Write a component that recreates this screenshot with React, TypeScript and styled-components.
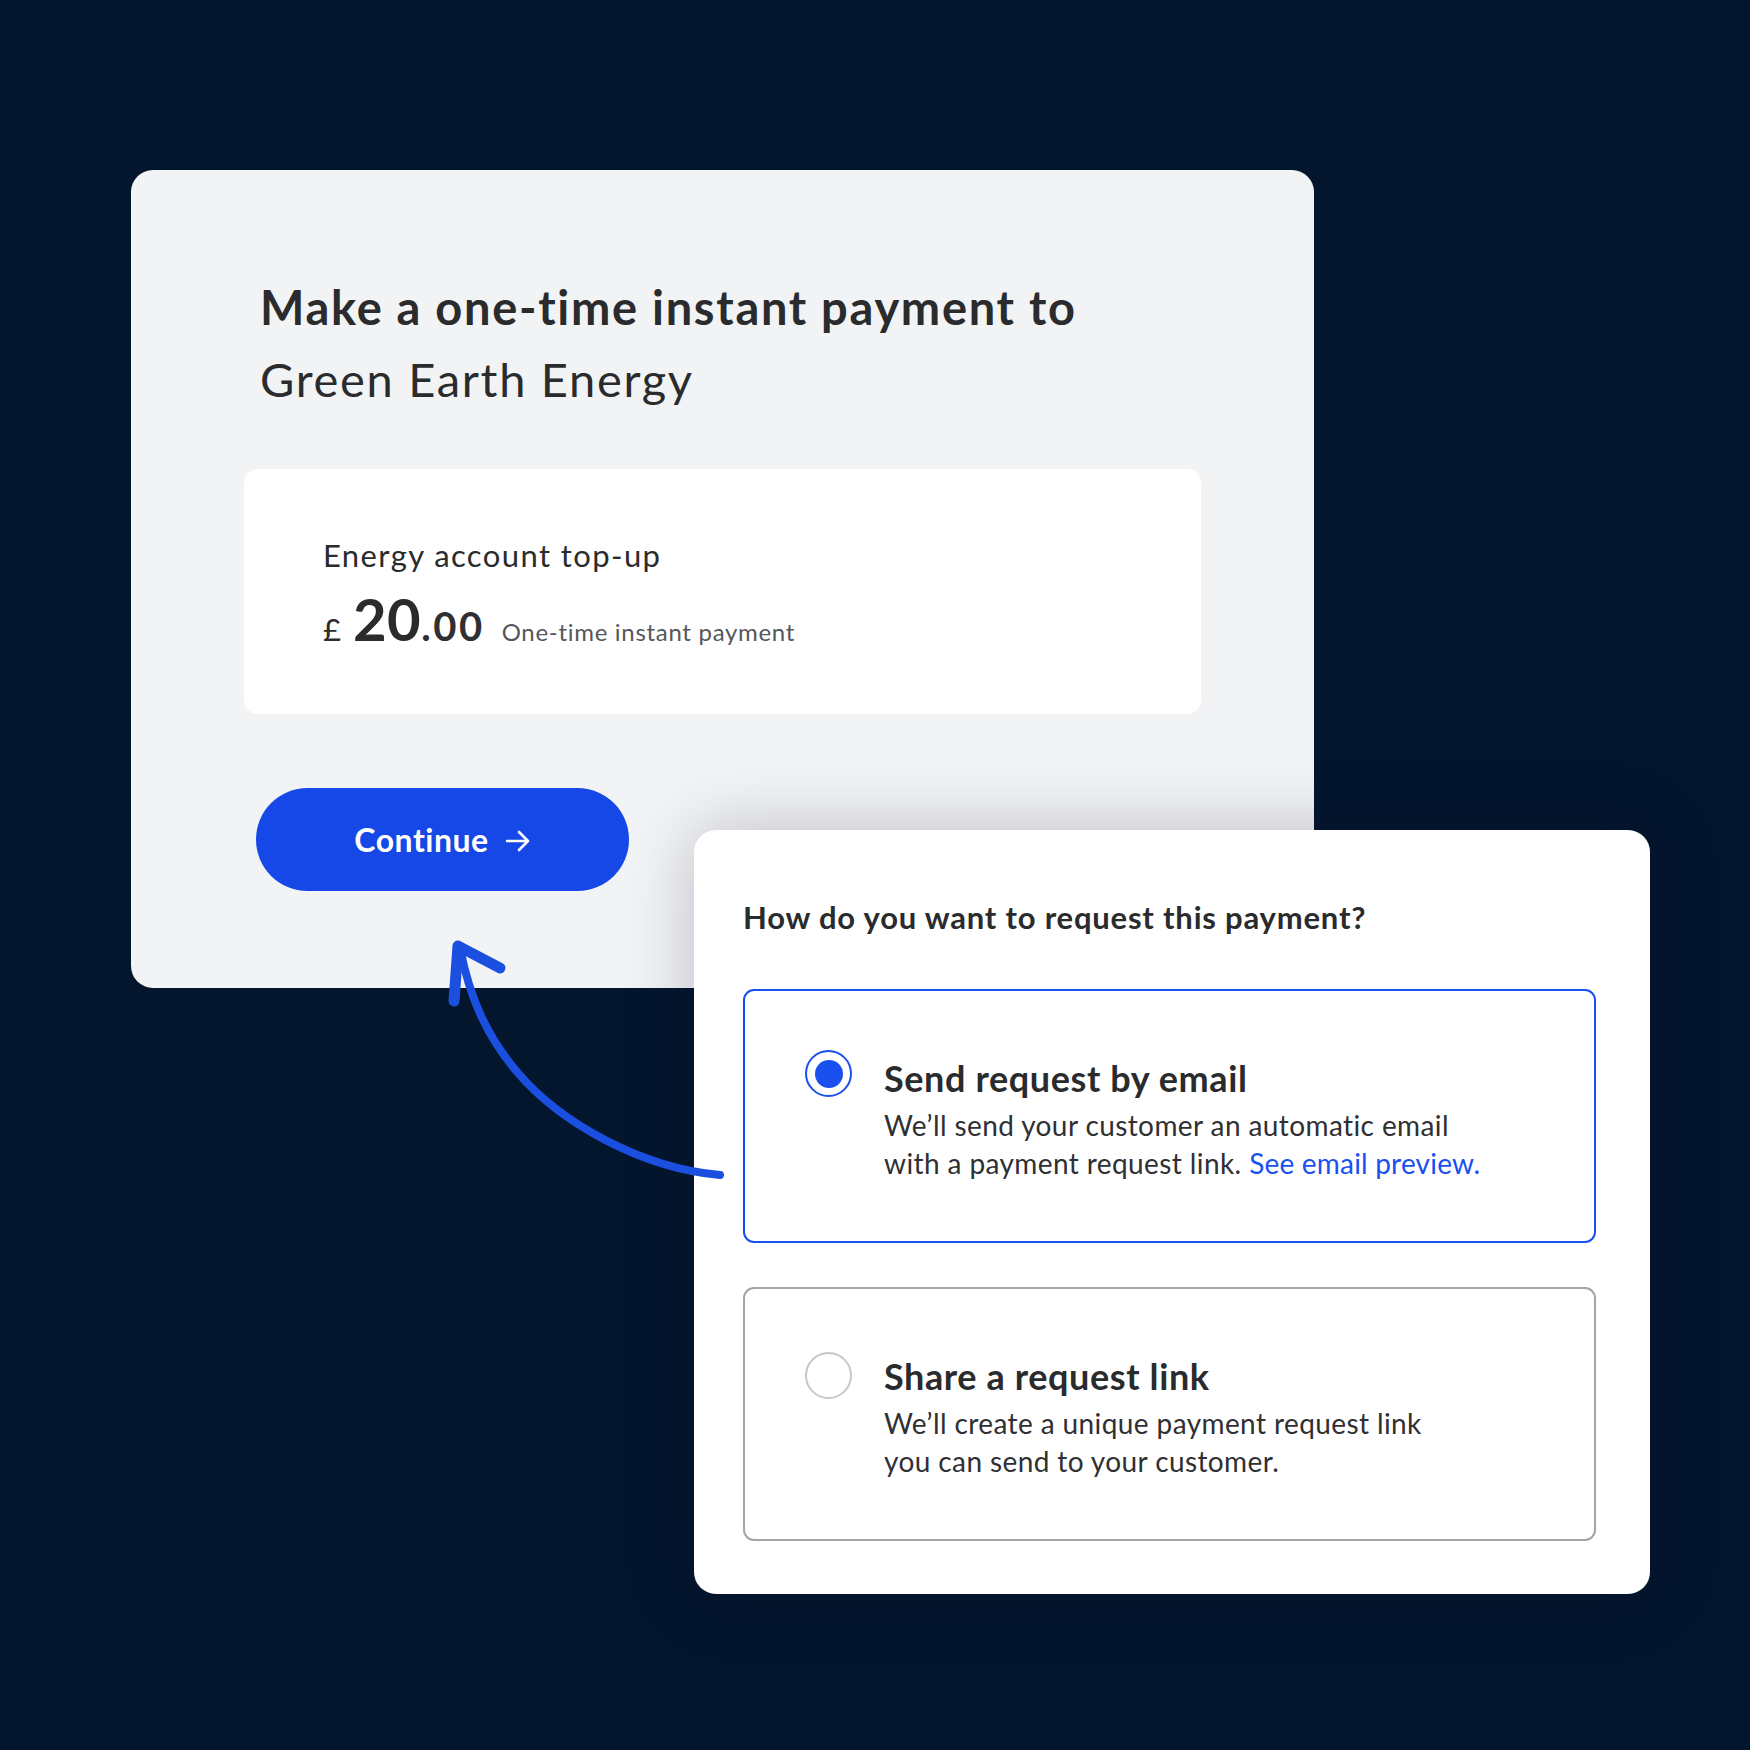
import React, { useState } from 'react'
import styled, { createGlobalStyle } from 'styled-components'

const GlobalStyle = createGlobalStyle`
    html, body {
        margin: 0;
        padding: 0;
        background: #04162e;
    }

    * {
        box-sizing: border-box;
    }
`

const Stage = styled.div`
    position: relative;
    width: 1750px;
    height: 1750px;
    background: #04162e;
    padding: 170px 0 0 131px;
    display: grid;
    grid-template-columns: 563px 620px 336px;
    grid-template-rows: 660px 158px 606px;
    font-family: Lato, 'Noto Sans', sans-serif;
    color: #2a2b2d;
`

const PaymentCard = styled.section`
    grid-column: 1 / 3;
    grid-row: 1 / 3;
    background: #f2f3f5;
    border-radius: 22px;
    padding: 101px 113px 0;
    display: flex;
    flex-direction: column;
    align-items: flex-start;
`

const Title = styled.h1`
    margin: 0 0 0 16px;
    font-size: 47px;
    line-height: 72px;
    font-weight: 700;
    letter-spacing: 1.7px;
`

const Payee = styled.span`
    display: block;
    font-weight: 400;
`

const SummaryBox = styled.div`
    align-self: stretch;
    margin-top: 54px;
    height: 245px;
    background: #ffffff;
    border-radius: 14px;
    padding: 66px 79px 0;
`

const SummaryLabel = styled.div`
    font-size: 31px;
    line-height: 40px;
    letter-spacing: 1.4px;
`

const AmountRow = styled.div`
    display: flex;
    align-items: baseline;
    margin-top: 14px;
`

const Currency = styled.span`
    font-size: 31px;
    margin-right: 12px;
`

const Whole = styled.span`
    font-size: 58px;
    font-weight: 700;
    line-height: 60px;
    letter-spacing: 0.5px;
`

const Fraction = styled.span`
    font-size: 40px;
    font-weight: 700;
    color: #2f3033;
    letter-spacing: 2.5px;
`

const AmountNote = styled.span`
    font-size: 24px;
    color: #55575b;
    margin-left: 17px;
    letter-spacing: 0.7px;
`

const ContinueButton = styled.button`
    margin: 74px 0 0 12px;
    width: 373px;
    height: 103px;
    border: none;
    border-radius: 52px;
    background: #1548e6;
    color: #ffffff;
    font-family: inherit;
    font-size: 32px;
    font-weight: 700;
    letter-spacing: 0.5px;
    display: flex;
    align-items: center;
    justify-content: center;
    gap: 16px;
    cursor: pointer;

    svg {
        margin-top: 2px;
    }
`

const RequestCard = styled.section`
    position: relative;
    z-index: 1;
    grid-column: 2 / 4;
    grid-row: 2 / 4;
    background: #ffffff;
    border-radius: 22px;
    padding: 67px 54px 0 49px;
    box-shadow: 0 0 70px rgba(0, 10, 30, 0.22);
    display: flex;
    flex-direction: column;
`

const Question = styled.h2`
    margin: 0 0 52px;
    font-size: 31px;
    line-height: 40px;
    font-weight: 700;
    letter-spacing: 0.8px;
`

const OptionList = styled.div`
    display: flex;
    flex-direction: column;
    gap: 44px;
`

const Option = styled.label<{ $selected: boolean }>`
    height: 254px;
    border: 2px solid ${p => (p.$selected ? '#1a4ff0' : '#a3a4a7')};
    border-radius: 11px;
    padding: 65px 40px 0 60px;
    display: flex;
    align-items: flex-start;
    gap: 32px;
    cursor: pointer;
`

const Radio = styled.span<{ $selected: boolean }>`
    flex: none;
    width: 47px;
    height: 47px;
    margin-top: ${p => (p.$selected ? '-6px' : '-2px')};
    border-radius: 50%;
    border: ${p => (p.$selected ? '2.5px solid #1a4ff0' : '2px solid #c6c7ca')};
    display: flex;
    align-items: center;
    justify-content: center;

    &::after {
        content: '';
        width: 28px;
        height: 28px;
        border-radius: 50%;
        background: #1a4ff0;
        display: ${p => (p.$selected ? 'block' : 'none')};
    }
`

const OptionText = styled.div`
    display: flex;
    flex-direction: column;
`

const OptionTitle = styled.div`
    font-size: 36px;
    line-height: 44px;
    font-weight: 700;
    letter-spacing: 0.6px;
    margin-bottom: 6px;
`

const OptionBody = styled.p`
    margin: 0;
    font-size: 28px;
    line-height: 38px;
    color: #2f3033;
    letter-spacing: 0.4px;
`

const PreviewLink = styled.a`
    color: #1a4ff0;
    text-decoration: none;
    letter-spacing: 0.2px;
`

const Scribble = styled.svg`
    position: absolute;
    left: 0;
    top: 0;
    z-index: 2;
    pointer-events: none;
`

const options = [
    {
        id: 'email',
        title: 'Send request by email',
        lines: ['We’ll send your customer an automatic email', 'with a payment request link.'],
        link: 'See email preview.',
    },
    {
        id: 'link',
        title: 'Share a request link',
        lines: ['We’ll create a unique payment request link', 'you can send to your customer.'],
        link: null,
    },
]

export default function App() {
    const [method, setMethod] = useState('email')

    return (
        <>
            <GlobalStyle />
            <Stage>
                <PaymentCard>
                    <Title>
                        Make a one-time instant payment to
                        <Payee>Green Earth Energy</Payee>
                    </Title>

                    <SummaryBox>
                        <SummaryLabel>Energy account top-up</SummaryLabel>
                        <AmountRow>
                            <Currency>£</Currency>
                            <Whole>20</Whole>
                            <Fraction>.00</Fraction>
                            <AmountNote>One-time instant payment</AmountNote>
                        </AmountRow>
                    </SummaryBox>

                    <ContinueButton>
                        Continue
                        <svg width="26" height="22" viewBox="0 0 26 22" fill="none">
                            <path
                                d="M2 11h21M14 2l9 9-9 9"
                                stroke="#fff"
                                strokeWidth="2.6"
                                strokeLinecap="round"
                                strokeLinejoin="round"
                            />
                        </svg>
                    </ContinueButton>
                </PaymentCard>

                <RequestCard>
                    <Question>How do you want to request this payment?</Question>

                    <OptionList>
                        {options.map(option => {
                            const selected = method === option.id
                            return (
                                <Option
                                    key={option.id}
                                    $selected={selected}
                                    onClick={() => setMethod(option.id)}
                                >
                                    <Radio $selected={selected} />
                                    <OptionText>
                                        <OptionTitle>{option.title}</OptionTitle>
                                        <OptionBody>
                                            {option.lines[0]}
                                            <br />
                                            {option.lines[1]}
                                            {option.link && (
                                                <>
                                                    {' '}
                                                    <PreviewLink href="#">{option.link}</PreviewLink>
                                                </>
                                            )}
                                        </OptionBody>
                                    </OptionText>
                                </Option>
                            )
                        })}
                    </OptionList>
                </RequestCard>

                {/* hand-drawn arrow pointing back at the Continue button */}
                <Scribble width="1750" height="1750" viewBox="0 0 1750 1750" fill="none">
                    <path
                        d="M720 1175 C 640 1168, 560 1122, 518 1073 C 488 1038, 470 1000, 460 948"
                        stroke="#1a4fe0"
                        strokeWidth="8"
                        strokeLinecap="round"
                    />
                    <path
                        d="M454 1001 L 458 946 L 500 968"
                        stroke="#1a4fe0"
                        strokeWidth="11"
                        strokeLinecap="round"
                        strokeLinejoin="round"
                    />
                </Scribble>
            </Stage>
        </>
    )
}
